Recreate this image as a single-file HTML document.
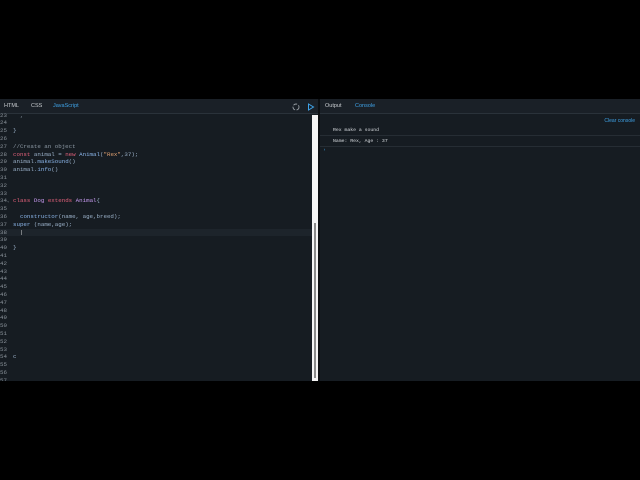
<!DOCTYPE html>
<html><head><style>
*{margin:0;padding:0;box-sizing:border-box}
body{width:640px;height:480px;background:#000;position:relative;overflow:hidden;font-family:"Liberation Sans",sans-serif}
#app{position:absolute;left:0;top:99px;width:640px;height:282px;background:#161c22}
.hdr{position:absolute;top:0;height:15px;background:#1a2027;border-bottom:1px solid #2a323a;font-size:5.5px;color:#c8ccd0;line-height:15px}
.hdr span{position:absolute}
.code{position:absolute;left:0;top:0;width:312px;height:282px;overflow:hidden;font-family:"Liberation Mono",monospace;font-size:5.8px;color:#9ab0c8}
.ln{position:absolute;left:0;height:7.8px;line-height:7.8px;white-space:pre}
.n{position:absolute;left:0;color:#8a929a;width:10px}
.t{position:absolute;left:13px}
.k{color:#e0607a}.c{color:#8a96a2}.f{color:#8ab4e8}.s{color:#e0a070}.cl{color:#c79af0}
</style></head><body>
<div id="app">
<div class="hdr" style="left:0;width:318px"><span style="left:4px">HTML</span><span style="left:31px">CSS</span><span style="left:53px;color:#3fa3e8">JavaScript</span>
<svg style="position:absolute;left:292px;top:4px" width="8" height="8"><circle cx="4" cy="4" r="3" fill="none" stroke="#9aa0a6" stroke-width="0.9" stroke-dasharray="4 1.5"/></svg>
<svg style="position:absolute;left:307px;top:3.5px" width="8" height="8"><path d="M1.5 1 L6.5 4 L1.5 7 Z" fill="none" stroke="#3fa3e8" stroke-width="1"/></svg></div>
<div class="hdr" style="left:320px;width:320px"><span style="left:5px">Output</span><span style="left:35px;color:#3fa3e8">Console</span></div>
<div class="code" id="c"></div>
<div style="position:absolute;left:312px;top:16px;width:6px;height:266px;background:#f4f4f4"></div>
<div style="position:absolute;left:314px;top:124px;width:2px;height:155px;background:#8a8a8a"></div>
<div style="position:absolute;left:318px;top:0;width:2px;height:282px;background:#0c0f12"></div>
<div style="position:absolute;left:320px;top:16px;width:320px;height:266px;font-family:'Liberation Mono',monospace;font-size:4.8px;color:#d8dce0">
<div style="position:absolute;right:5px;top:3px;font-family:'Liberation Sans',sans-serif;font-size:5px;color:#3fa3e8">Clear console</div>
<div style="position:absolute;left:0;top:10px;width:320px;height:11px;border-bottom:1px solid #262d34;line-height:11px;padding-left:13px">Rex make a sound</div>
<div style="position:absolute;left:0;top:21px;width:320px;height:11px;border-bottom:1px solid #262d34;line-height:11px;padding-left:13px">Name: Rex, Age : 37</div>
<div style="position:absolute;left:3px;top:32px;color:#3fa3e8;line-height:8px">›</div>
</div>
</div>
<script>
var L={23:'<span class="c">  ,</span>',25:'}',27:'<span class="c">//Create an object</span>',28:'<span class="k">const</span> animal = <span class="k">new</span> <span class="f">Animal</span>(<span class="s">"Rex"</span>,37);',29:'animal.<span class="f">makeSound</span>()',30:'animal.<span class="f">info</span>()',34:'<span class="k">class</span> <span class="cl">Dog</span> <span class="k">extends</span> <span class="cl">Animal</span>{',36:'  <span class="f">constructor</span>(name, age,breed);',37:'<span class="f">super</span> (name,age);',38:'  <span style="color:#ddd">|</span>',40:'}',54:'c'};
var h='';for(var n=23;n<=57;n++){var y=(1.8+(n-24)*7.8)+18.5;h+='<div class="ln" style="top:'+y+'px;width:312px;'+(n==38?'background:#1d242b;':'')+'"><span class="n">'+n+(n==34?'<span style="font-size:4px">⌄</span>':'')+'</span><span class="t">'+(L[n]||'')+'</span></div>';}
document.getElementById('c').innerHTML=h;
</script>
</body></html>
